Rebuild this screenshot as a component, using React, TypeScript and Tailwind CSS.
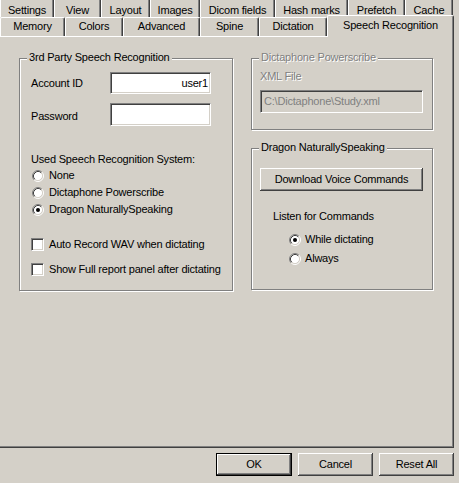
import React from "react";

const FONT = "font-['Liberation_Sans',Arial,sans-serif] text-[11px] leading-[13px] tracking-[-0.2px] text-black";
const SUNKEN =
  "border border-t-[#808080] border-l-[#808080] border-r-white border-b-white shadow-[inset_1px_1px_0_#404040,inset_-1px_-1px_0_#d4d0c8]";
const RAISED =
  "shadow-[inset_-1px_-1px_0_#404040,inset_1px_1px_0_#fff,inset_-2px_-2px_0_#808080,inset_2px_2px_0_#d4d0c8]";
const TAB =
  "border-t border-l border-white border-r border-r-[#404040] shadow-[inset_-1px_0_0_#808080] rounded-tl-[2px] rounded-tr-[2px] bg-[#d4d0c8] text-center whitespace-nowrap shrink-0";
const GROUP =
  "border border-[#808080] shadow-[inset_1px_1px_0_#fff,1px_1px_0_#fff] flex flex-col";
const DISABLED = "text-[#808080] [text-shadow:1px_1px_0_#fff]";

function Radio({ checked }: { checked?: boolean }) {
  return (
    <svg width="12" height="12" viewBox="0 0 12 12" className="shrink-0">
      <circle cx="6" cy="6" r="4.5" fill="#fff" />
      <path d="M2.11 9.89A5.5 5.5 0 0 1 9.89 2.11" fill="none" stroke="#808080" />
      <path d="M9.89 2.11A5.5 5.5 0 0 1 2.11 9.89" fill="none" stroke="#fff" />
      <path d="M2.82 9.18A4.5 4.5 0 0 1 9.18 2.82" fill="none" stroke="#404040" />
      <path d="M9.18 2.82A4.5 4.5 0 0 1 2.82 9.18" fill="none" stroke="#d4d0c8" />
      {checked && <circle cx="6" cy="6" r="2" fill="#000" />}
    </svg>
  );
}

function Check() {
  return <div className={"w-[13px] h-[13px] bg-white shrink-0 " + SUNKEN} />;
}

const row1: [string, string][] = [
  ["Settings", "w-[54px]"],
  ["View", "w-[47px]"],
  ["Layout", "w-[49px]"],
  ["Images", "w-[50px]"],
  ["Dicom fields", "w-[75px]"],
  ["Hash marks", "w-[73px]"],
  ["Prefetch", "w-[57px]"],
  ["Cache", "w-[48px]"],
];

const row2: [string, string][] = [
  ["Memory", "w-[65px]"],
  ["Colors", "w-[58px]"],
  ["Advanced", "w-[77px]"],
  ["Spine", "w-[59px]"],
  ["Dictation", "w-[68px]"],
];

export default function App() {
  return (
    <div className={"w-[459px] h-[483px] bg-[#d4d0c8] overflow-hidden flex flex-col " + FONT}>
      {/* tab row 1 */}
      <div className="h-[17px] flex items-end">
        {row1.map(([t, w]) => (
          <div key={t} className={TAB + " h-[19px] pt-[5px] " + w}>
            {t}
          </div>
        ))}
      </div>
      {/* tab row 2 */}
      <div className="h-[19px] flex items-end">
        {row2.map(([t, w]) => (
          <div key={t} className={TAB + " h-[19px] pt-[2px] " + w}>
            {t}
          </div>
        ))}
        <div className={TAB + " relative z-10 h-[22px] -mb-[1px] pt-[3px] w-[127px]"}>
          Speech Recognition
        </div>
      </div>
      {/* panel */}
      <div className="-ml-[2px] w-[456px] h-[412px] border-l border-t border-white border-r border-b border-r-[#404040] border-b-[#404040] shadow-[inset_-1px_-1px_0_#808080] flex pl-[20px] pt-[21px] gap-[18px]">
        {/* left group */}
        <div className={GROUP + " w-[214px] h-[233px]"}>
          <div className="-mt-[8px] ml-[7px] px-[2px] w-fit bg-[#d4d0c8]">3rd Party Speech Recognition</div>
          <div className="flex items-center mt-[8px] pl-[11px]">
            <div className="w-[79px]">Account ID</div>
            <div className={"w-[101px] h-[22px] bg-white flex items-center justify-end pr-[2px] " + SUNKEN}>user1</div>
          </div>
          <div className="flex items-center mt-[9px] pl-[11px]">
            <div className="w-[79px] pt-[3px]">Password</div>
            <div className={"w-[101px] h-[23px] bg-white " + SUNKEN} />
          </div>
          <div className="mt-[27px] pl-[11px]">Used Speech Recognition System:</div>
          <div className="mt-[1px] pl-[12px] flex flex-col">
            <div className="h-[17px] flex items-center gap-[5px]">
              <Radio />
              <span>None</span>
            </div>
            <div className="h-[17px] flex items-center gap-[5px]">
              <Radio />
              <span>Dictaphone Powerscribe</span>
            </div>
            <div className="h-[17px] flex items-center gap-[5px]">
              <Radio checked />
              <span>Dragon NaturallySpeaking</span>
            </div>
          </div>
          <div className="mt-[18px] pl-[11px] h-[17px] flex items-center gap-[5px]">
            <Check />
            <span>Auto Record WAV when dictating</span>
          </div>
          <div className="mt-[8px] pl-[11px] h-[17px] flex items-center gap-[5px]">
            <Check />
            <span>Show Full report panel after dictating</span>
          </div>
        </div>
        {/* right column */}
        <div className="flex flex-col">
          <div className={GROUP + " w-[182px] h-[72px]"}>
            <div className={"-mt-[8px] ml-[7px] px-[2px] w-fit bg-[#d4d0c8] " + DISABLED}>Dictaphone Powerscribe</div>
            <div className={"mt-[6px] pl-[8px] " + DISABLED}>XML File</div>
            <div className={"mt-[7px] ml-[8px] w-[163px] h-[23px] bg-[#d4d0c8] flex items-center pl-[3px] text-[#808080] " + SUNKEN}>
              C:\Dictaphone\Study.xml
            </div>
          </div>
          <div className={GROUP + " mt-[18px] w-[182px] h-[142px]"}>
            <div className="-mt-[8px] ml-[7px] px-[2px] w-fit bg-[#d4d0c8]">Dragon NaturallySpeaking</div>
            <div className={"mt-[14px] ml-[8px] w-[163px] h-[23px] flex items-center justify-center " + RAISED}>
              Download Voice Commands
            </div>
            <div className="mt-[19px] pl-[21px]">Listen for Commands</div>
            <div className="mt-[8px] pl-[37px] flex flex-col gap-[2px]">
              <div className="h-[17px] flex items-center gap-[4px]">
                <Radio checked />
                <span>While dictating</span>
              </div>
              <div className="h-[17px] flex items-center gap-[4px]">
                <Radio />
                <span>Always</span>
              </div>
            </div>
          </div>
        </div>
      </div>
      {/* buttons */}
      <div className="mt-[5px] flex justify-end gap-[6px] pr-[5px]">
        <div className={"w-[76px] h-[23px] border border-black flex items-center justify-center " + RAISED}>OK</div>
        <div className={"w-[75px] h-[23px] flex items-center justify-center " + RAISED}>Cancel</div>
        <div className={"w-[75px] h-[23px] flex items-center justify-center " + RAISED}>Reset All</div>
      </div>
    </div>
  );
}
